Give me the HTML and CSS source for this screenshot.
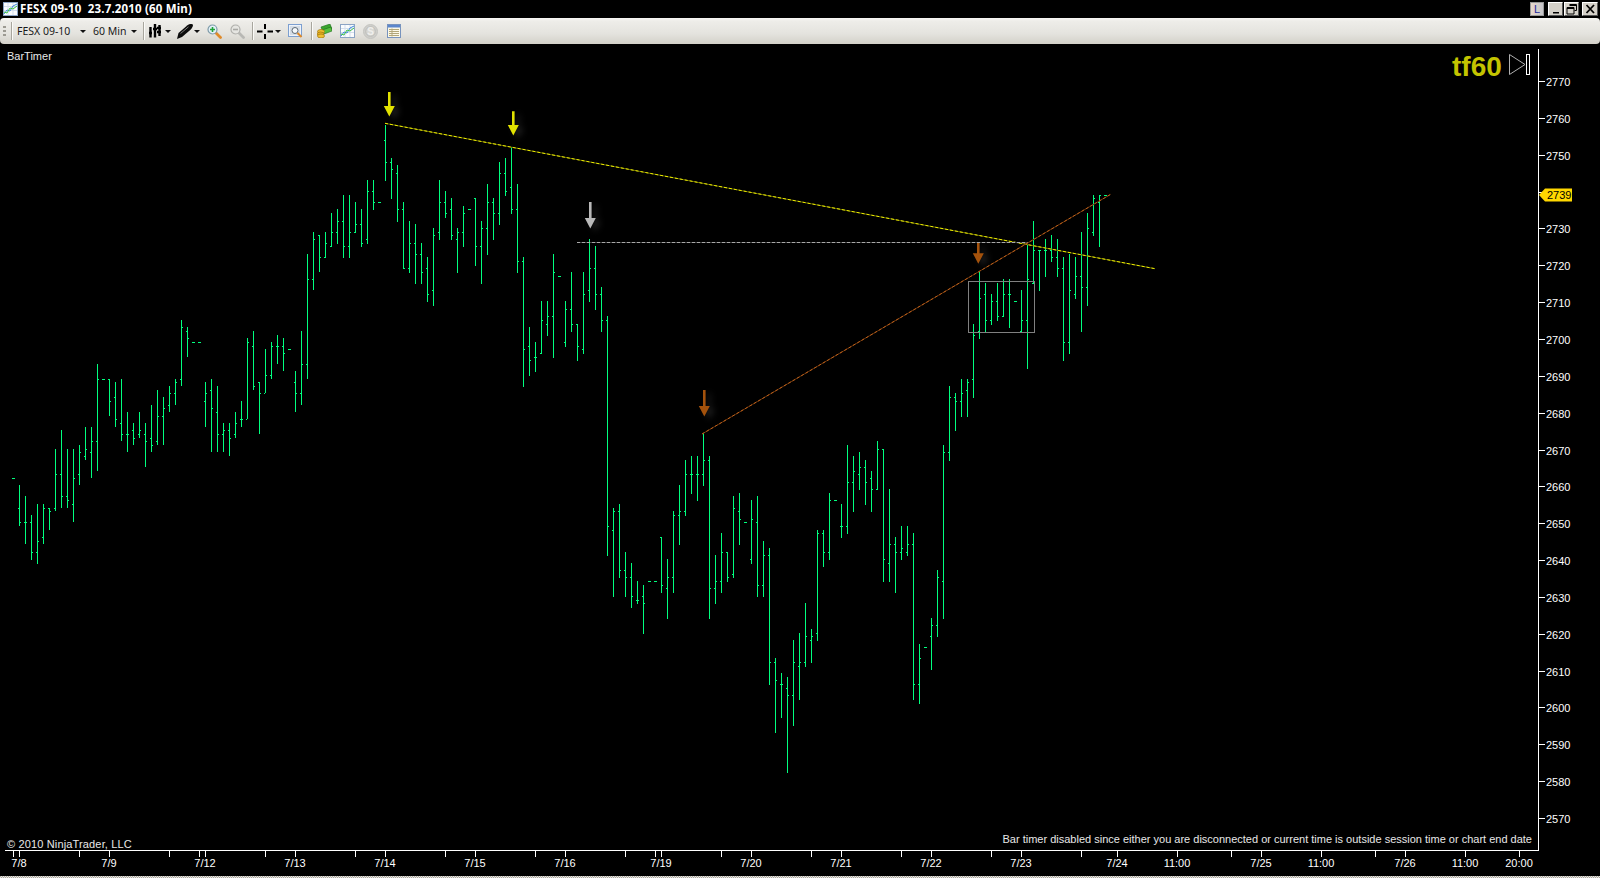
FILE: index.html
```html
<!DOCTYPE html>
<html lang="en">
<head>
<meta charset="utf-8">
<title>FESX 09-10 23.7.2010 (60 Min)</title>
<link rel="stylesheet" href="styles.css">
</head>
<body>
<svg class="defs" width="0" height="0" aria-hidden="true">
  <symbol id="chart-icon" viewBox="0 0 15 14">
    <rect x="0.5" y="0.5" width="14" height="13" fill="#fafcfe" stroke="#8ba4c4"/>
    <path d="M1 4.500H14M1 8.500H14M5 1V13M10 1V13" stroke="#d3deec" fill="none"/>
    <path d="M1 12L4 8L7 9L10 4L14 2" stroke="#3b86d8" stroke-width="1" fill="none"/>
    <path d="M1 10L4 11L7 6L10 7L14 4" stroke="#3cbf48" stroke-width="1" fill="none"/>
  </symbol>
</svg>

<header class="titlebar">
  <svg class="app-icon" width="15" height="14"><use href="#chart-icon"/></svg>
  <span class="title">FESX 09-10  23.7.2010 (60 Min)</span>
  <div class="winbtns">
    <span class="winbtn lock">L</span>
    <span class="winbtn min"><svg width="10" height="10"><path d="M2 8H8V9.500H2Z" fill="#000"/></svg></span>
    <span class="winbtn res"><svg width="12" height="11"><path d="M3.500 .5H10.500V6.500H8.500M1 3.500H8V10H1ZM1 4.500H8M3.500 1.500H10.500" fill="none" stroke="#000"/></svg></span>
    <span class="winbtn cls"><svg width="11" height="10"><path d="M1.500 1L9 9M9 1L1.500 9" stroke="#000" stroke-width="1.800"/></svg></span>
  </div>
</header>

<nav class="toolbar">
  <span class="grip"></span>
  <span class="sep ml5"></span>
  <span class="tb-text w55 ml5">FESX 09-10</span>
  <span class="caret ml8"></span>
  <span class="tb-text w30 ml8">60 Min</span>
  <span class="caret ml8"></span>
  <span class="sep ml7"></span>
  <svg class="ml5" width="12" height="14" viewBox="0 0 12 14"><path d="M1.500 3V13.500M0 9H3M6 0V13.500M4 5H8M10.500 1V12M8 4H12M8 8H12" stroke="#000" stroke-width="2.400" fill="none"/></svg>
  <span class="caret ml4"></span>
  <svg class="ml7" width="16" height="15" viewBox="0 0 16 15"><path d="M0 15L1.500 9L10.500 1.200C12.500 -.3 15.300 -.3 15.800 .6C16.300 2 15 4.300 13.500 5.800L5 13Z" fill="#0c0c0c"/><path d="M3.500 9.500L11.500 2.800" stroke="#9a9a9a" stroke-width=".8"/></svg>
  <span class="caret ml1"></span>
  <svg class="ml8" width="15" height="15" viewBox="0 0 15 15"><path d="M8.500 8.500L13.500 13.500" stroke="#e08a28" stroke-width="2.800" stroke-linecap="round"/><circle cx="5.500" cy="5.500" r="4.500" fill="#e4f1f8" stroke="#7d9aa8" stroke-width="1.200"/><path d="M3 5.500H8M5.500 3V8" stroke="#1fa23a" stroke-width="1.600"/></svg>
  <svg class="ml8" width="15" height="15" viewBox="0 0 15 15"><path d="M8.500 8.500L13.500 13.500" stroke="#b8b8b4" stroke-width="2.800" stroke-linecap="round"/><circle cx="5.500" cy="5.500" r="4.500" fill="#e6e6e2" stroke="#b0b0ac" stroke-width="1.200"/><path d="M3 5.500H8" stroke="#a8a8a4" stroke-width="1.600"/></svg>
  <span class="sep ml7"></span>
  <svg class="ml4" width="16" height="15" viewBox="0 0 16 15"><path d="M0 7.500H5.500M10.500 7.500H16M8 0V5M8 10V15" stroke="#000" stroke-width="2" fill="none"/></svg>
  <span class="caret ml2"></span>
  <svg class="ml8" width="15" height="14" viewBox="0 0 15 14"><rect x=".5" y=".5" width="13" height="12" fill="#eef3fa" stroke="#7c9fd0"/><rect x="2" y="2" width="10" height="9" fill="#d5dde6"/><circle cx="7" cy="6.500" r="3" fill="#f6f9fc" stroke="#5c6974"/><path d="M9.500 9L13.500 13" stroke="#e08a28" stroke-width="2"/></svg>
  <span class="sep ml8"></span>
  <svg class="ml5" width="15" height="14" viewBox="0 0 15 14"><path d="M4 3L13 0L15 5L6 8Z" fill="#3aa52e" stroke="#1d6e1a" stroke-width=".6"/><path d="M5 6L14 3L15 7L7 10Z" fill="#57c040" stroke="#1d6e1a" stroke-width=".6"/><ellipse cx="4" cy="7.500" rx="3.500" ry="2" fill="#f0c030" stroke="#9c7210" stroke-width=".7"/><ellipse cx="3.500" cy="10" rx="3.500" ry="2" fill="#e8b020" stroke="#9c7210" stroke-width=".7"/><ellipse cx="4" cy="12" rx="3.500" ry="2" fill="#f0c030" stroke="#9c7210" stroke-width=".7"/></svg>
  <svg class="ml8" width="15" height="14"><use href="#chart-icon"/></svg>
  <svg class="ml8" width="15" height="15" viewBox="0 0 15 15"><circle cx="7.500" cy="7.500" r="7" fill="#cfcfcb" stroke="#c4c4c0"/><circle cx="7.500" cy="7.500" r="4.800" fill="#d8d8d4" stroke="#bdbdb9"/><text class="dollar" x="7.500" y="11">S</text></svg>
  <svg class="ml9" width="14" height="14" viewBox="0 0 14 14"><rect x=".5" y=".5" width="13" height="13" fill="#fbf8e8" stroke="#7793bd"/><rect x="1" y="1" width="12" height="2.500" fill="#5b86cc"/><path d="M2 5.500H12M2 7.500H12M2 9.500H12M2 11.500H12M5 4.500V12.500" stroke="#b2a678" fill="none"/></svg>
</nav>

<main class="chart">
  <svg class="plot" viewBox="0 44 1600 832" width="1600" height="832">
    <text class="lbl" x="7" y="60">BarTimer</text>

    <text class="tf" x="1452" y="76">tf60</text>
    <path class="play" d="M1509.500 54.500V74.500L1525 64.500Z"/>
    <rect class="playbar" x="1526.500" y="54.500" width="3" height="20"/>

    <path id="bars" class="bars"/>

    <path class="trend-bg yellow-bg" d="M385 123.300L1155 268.700"/>
    <path class="trend yellow" d="M385 123.300L1155 268.700"/>
    <path class="trend-bg white-bg" d="M577 242.500H1028"/>
    <path class="trend white" d="M577 242.500H1028"/>
    <path class="trend-bg orange-bg" d="M702 434L1110.700 194.300"/>
    <path class="trend orange" d="M702 434L1110.700 194.300"/>
    <rect class="box" x="968.500" y="281.500" width="66" height="51"/>

    <path class="arrow a-yellow" d="M388 92H390.600V106H394.800L389.300 116.500L383.800 106H388Z"/>
    <path class="arrow a-yellow" d="M512 111.300H514.600V125H518.800L513.300 135.500L507.800 125H512Z"/>
    <path class="arrow a-gray" d="M589 202H591.600V218H595.800L590.300 228.500L584.800 218H589Z"/>
    <path class="arrow a-brown" d="M703 390H705.600V406H709.800L704.300 416.500L698.800 406H703Z"/>
    <path class="arrow a-brown" d="M977 243H979.600V253.300H983.800L978.300 263.800L972.800 253.300H977Z"/>

    <path class="axis" d="M1538.500 49V851M5 850.500H1539"/>
    <path class="axis" d="M1539 81.500H1545M1539 118.500H1545M1539 155.500H1545M1539 192.500H1545M1539 228.500H1545M1539 265.500H1545M1539 302.500H1545M1539 339.500H1545M1539 376.500H1545M1539 413.500H1545M1539 450.500H1545M1539 486.500H1545M1539 523.500H1545M1539 560.500H1545M1539 597.500H1545M1539 634.500H1545M1539 671.500H1545M1539 707.500H1545M1539 744.500H1545M1539 781.500H1545M1539 818.500H1545"/>
    <path class="axis" d="M13.500 851V857M19.500 851V857M79.500 851V857M109.500 851V857M169.500 851V857M199.500 851V857M205.500 851V857M265.500 851V857M295.500 851V857M355.500 851V857M385.500 851V857M445.500 851V857M475.500 851V857M535.500 851V857M565.500 851V857M625.500 851V857M655.500 851V857M661.500 851V857M721.500 851V857M751.500 851V857M811.500 851V857M841.500 851V857M901.500 851V857M931.500 851V857M991.500 851V857M1021.500 851V857M1081.500 851V857M1117.500 851V857M1177.500 851V857M1231.500 851V857M1261.500 851V857M1321.500 851V857M1375.500 851V857M1405.500 851V857M1465.500 851V857M1519.500 851V857"/>

    <g class="prices">
      <text x="1546" y="86">2770</text><text x="1546" y="123">2760</text><text x="1546" y="160">2750</text><text x="1546" y="197">2740</text>
      <text x="1546" y="233">2730</text><text x="1546" y="270">2720</text><text x="1546" y="307">2710</text><text x="1546" y="344">2700</text>
      <text x="1546" y="381">2690</text><text x="1546" y="418">2680</text><text x="1546" y="455">2670</text><text x="1546" y="491">2660</text>
      <text x="1546" y="528">2650</text><text x="1546" y="565">2640</text><text x="1546" y="602">2630</text><text x="1546" y="639">2620</text>
      <text x="1546" y="676">2610</text><text x="1546" y="712">2600</text><text x="1546" y="749">2590</text><text x="1546" y="786">2580</text>
      <text x="1546" y="823">2570</text>
    </g>
    <path class="flag" d="M1539 195L1545 188.500H1572V201.500H1545Z"/>
    <text class="flag-text" x="1547" y="199">2739</text>

    <g class="dates">
      <text x="19" y="867">7/8</text><text x="109" y="867">7/9</text><text x="205" y="867">7/12</text><text x="295" y="867">7/13</text>
      <text x="385" y="867">7/14</text><text x="475" y="867">7/15</text><text x="565" y="867">7/16</text><text x="661" y="867">7/19</text>
      <text x="751" y="867">7/20</text><text x="841" y="867">7/21</text><text x="931" y="867">7/22</text><text x="1021" y="867">7/23</text>
      <text x="1117" y="867">7/24</text><text x="1177" y="867">11:00</text><text x="1261" y="867">7/25</text><text x="1321" y="867">11:00</text>
      <text x="1405" y="867">7/26</text><text x="1465" y="867">11:00</text><text x="1519" y="867">20:00</text>
    </g>

    <text class="lbl copy" x="7" y="848">© 2010 NinjaTrader, LLC</text>
    <text class="lbl end" x="1532" y="843">Bar timer disabled since either you are disconnected or current time is outside session time or chart end date</text>
  </svg>
</main>
<footer class="strip"></footer>
<script src="chart.js"></script>
</body>
</html>
```
FILE: styles.css
```css
* { box-sizing: border-box; }
html, body { margin: 0; height: 100%; }
body {
  width: 1600px;
  height: 878px;
  overflow: hidden;
  background: #000;
  display: flex;
  flex-direction: column;
  font-family: "Liberation Sans", Arial, sans-serif;
}
.defs { position: absolute; }

.titlebar {
  height: 18px;
  display: flex;
  align-items: center;
  padding-left: 3px;
  color: #fff;
  background: #000;
}
.app-icon { margin-top: -1px; }
.title {
  margin-left: 2px;
  margin-top: -1px;
  white-space: pre;
  letter-spacing: .17px;
  font: bold 11.5px "Noto Sans", sans-serif;
}
.winbtns {
  margin-left: auto;
  display: flex;
  align-items: center;
  padding-right: 2px;
  gap: 1px;
}
.winbtn {
  width: 15px;
  height: 14px;
  display: flex;
  align-items: center;
  justify-content: center;
  background: #d4d0c8;
  border-style: solid;
  border-width: 1px;
  border-color: #fff #555 #555 #fff;
}
.lock {
  margin-right: 3px;
  width: 14px;
  background: linear-gradient(90deg, #e8d8cc, #c4c4c8);
  color: #1c2a9c;
  font-size: 11px;
  border-color: #999;
}
.cls { width: 16px; margin-left: 2px; }

.toolbar {
  height: 26px;
  display: flex;
  align-items: center;
  padding-left: 3px;
  border-radius: 4px;
  background: linear-gradient(#f8f7f4 0, #eeede9 12%, #e4e3de 60%, #d3d1c9 100%);
  color: #1a1a1a;
}
.toolbar svg { flex: none; }
.grip {
  width: 3px;
  height: 11px;
  background: repeating-linear-gradient(#9c9a92 0 2px, transparent 2px 4px);
}
.sep {
  width: 1px;
  height: 18px;
  background: #a8a69e;
  box-shadow: 1px 0 0 #fbfbf8;
}
.tb-text {
  white-space: nowrap;
  font: 10.5px "Noto Sans", sans-serif;
}
.w55 { width: 55px; }
.w30 { width: 30px; }
.caret {
  width: 0;
  height: 0;
  flex: none;
  box-sizing: content-box;
  margin-right: -1px;
  border-left: 3px solid transparent;
  border-right: 3px solid transparent;
  border-top: 3px solid #111;
}
.ml1 { margin-left: 1px; }
.ml2 { margin-left: 2px; }
.ml4 { margin-left: 4px; }
.ml5 { margin-left: 5px; }
.ml7 { margin-left: 7px; }
.ml8 { margin-left: 8px; }
.ml9 { margin-left: 9px; }
.dollar {
  font: bold 10px "Liberation Sans", sans-serif;
  fill: #efefec;
  text-anchor: middle;
}

.chart { flex: 1; min-height: 0; }
.plot { display: block; }
.plot text { font-family: "Liberation Sans", Arial, sans-serif; font-size: 11px; fill: #fff; }
.plot .lbl { fill: #e8e8e8; }
.plot .copy { letter-spacing: .15px; }
.plot .end { text-anchor: end; }
.plot .tf { font-size: 28px; font-weight: bold; fill: #c4c400; }
.plot .flag-text { fill: #000; }
.dates text { text-anchor: middle; }

.bars { fill: none; stroke: #00ff7f; stroke-width: 1; shape-rendering: crispEdges; }
.axis { fill: none; stroke: #fff; stroke-width: 1; shape-rendering: crispEdges; }
.play { fill: none; stroke: #b0b0b0; stroke-width: 1; }
.playbar { fill: none; stroke: #fff; stroke-width: 1; shape-rendering: crispEdges; }
.flag { fill: #ffd700; }

.trend, .trend-bg { fill: none; stroke-width: 1; }
.trend { stroke-dasharray: 3 2; }
.yellow { stroke: #ecec00; }
.yellow-bg { stroke: #6a6a00; }
.white { stroke: #a8a8a8; }
.white-bg { stroke: #444; }
.orange { stroke: #c06018; }
.orange-bg { stroke: #60320f; }
.box { fill: none; stroke: #808080; stroke-width: 1; shape-rendering: crispEdges; }

.arrow { filter: drop-shadow(5px 3px 3px rgba(255, 255, 255, .12)); }
.a-yellow { fill: #e2e200; }
.a-gray { fill: #b9b9b9; }
.a-brown { fill: #a4520c; }

.strip {
  height: 2px;
  background: repeating-conic-gradient(#e8e6e0 0 25%, #a8a6a0 0 50%) 0 0 / 2px 2px;
}
```
FILE: chart.js
```js
// Hourly OHLC bars. Each group: y origin, then rows of
// [x, high, low, open, close] or [x, flat], y values in thirds of a pixel.
var groups = [
  [250, [[13,685],[19,705,830,775,817],[25,738,884,817,817],[31,795,930,817,907],[37,762,942,907,874],[43,762,884,862,775],
    [49,775,842,775,784],[55,597,785,775,673],[61,540,776,673,739],[67,597,776,739,751],[73,597,818,763,685],[79,585,707,673,607],
    [85,531,632,619,598],[91,531,686,607,574],[97,342,665,574,388],[103,388],[109,388,500,388,454],[115,396,533,442,508],
    [121,387,575,520,553],[127,486,608,553,553],[133,519,587,541,565],[139,486,566,553,541],[145,519,653,553,574],[151,465,608,565,586],
    [157,420,587,574,499],[163,441,587,499,475],[169,408,488,466,430],[175,387,467,430,397],[181,210,410,388,232],[187,231,323,244,265],
    [193,277],[199,277],[205,396,533,454,430],[211,387,608,421,475],[217,408,608,487,553],[223,519,608,553,541],[229,519,620,541,565],
    [235,486,566,553,520],[241,453,533,508,508],[247,264,509,508,277],[253,243,422,289,409],[259,397,554,397,430],[265,297,430,430,376],
    [271,276,389,376,289],[277,255,344,289,289],[283,264,365,289,310],[289,298],[295,363,488,397,430],[301,243,467,430,343],
    [307,12,389,343,88],[313,-54,122,88,-33],[319,-45,68,-45,22]]],
  [90, [[325,426,504,502,460],[331,369,471,468,427],[337,357,462,427,394],[343,315,504,394,469],[349,315,504,469,427],
    [355,336,429,427,403],[361,357,471,403,460],[367,270,462,448,304]]],
  [80, [[373,300,390,334,367],[379,367],[385,135,303,181,247],[391,234,357,247,268],[397,255,426,280,388],[403,366,567,388,565],
    [409,423,579,565,490],[415,432,612,490,523],[421,489,612,523,577],[427,531,666,565,643],[433,444,678,631,466],[439,300,480,457,367],
    [445,333,414,367,400],[451,354,480,388,466],[457,444,579,478,457],[463,378,501,457,400],[469,388],[475,354,558,354,499],
    [481,423,612,499,445],[487,312,525,445,367],[493,354,480,367,400],[499,246,435,400,280],[505,234,348,280,334],[511,201,402,322,388],
    [517,312,579,388,544],[523,531,921,544,808],[529,741,888,799,841],[535,786,876,832,832],[541,663,822,820,721],[547,663,768,733,709],
    [553,522,834,709,577],[559,589],[565,663,801,787,688],[571,576,756,688,733],[577,732,843,733,799],[583,576,822,808,643],
    [589,477,666,631,565],[595,498,690,565,643],[601,621,756,643,721],[607,708,1428,721,1338]]],
  [380, [[613,384,651,451,394],[619,372,594,394,571],[625,516,651,571,592],[631,549,684,592,649],[637,603,672,661,661],[643,615,762,649,670],
    [649,604],[655,604],[661,471,639,471,616],[667,537,717,625,592],[673,393,639,592,406],[679,315,495,406,394],[685,240,408,394,283],
    [691,228,342,283,283],[697,228,363,283,283],[703,160,318,283,241],[709,228,717,241,625],[715,525,672,625,604],[721,459,639,604,517],
    [727,516,606,517,592],[733,348,594,583,385],[739,339,495,394,418],[745,427],[751,360,552,538,418],[757,348,651,427,616],[763,483,651,616,526],
    [769,504,915,526,847],[775,834,1059,847,901],[781,879,1014,913,913],[787,891,1179,925,946],[793,780,1038,946,847],[799,759,960,859,847],
    [805,669,861,847,769],[811,747,849,781,769],[817,450,783,760,460],[823,450,561,460,517],[829,339,540,517,361],[835,361],[841,372,474,439,439],
    [847,195,462,439,307],[853,228,396,307,274],[859,216,330,283,262],[865,240,375,262,307],[871,273,396,295,328],[877,183,330,328,208],
    [883,208,606,208,538],[889,327,606,550,493],[895,471,639,493,517],[901,438,540,517,505],[907,438,528,517,493]]],
  [420, [[913,339,840,373,793],[919,672,852,793,715],[925,682],[931,594,750,649,616],[937,450,651,616,472],[943,75,597,484,97],
    [949,-102,123,97,-69],[955,-81,33,-69,-57]]],
  [170, [[961,627,741,694,670],[967,627,741,661,637],[973,462,684,628,496],[979,303,507,484,385],[985,339,486,373,451],[991,372,465,451,394],
    [997,339,453,394,439],[1003,327,441,439,373],[1009,327,474,373,373],[1015,394],[1021,360,486,484,451],[1027,225,597,451,328],
    [1033,153,342,340,241],[1039,241,363,241,241],[1045,207,321,241,241],[1051,195,276,241,262],[1057,207,321,262,295],[1063,261,573,295,517],
    [1069,252,552,517,361],[1075,261,387,373,319],[1081,186,486,319,352],[1087,129,408,352,175],[1093,75,198,187,85],[1099,75,231,97,76],
    [1105,76]]]
];

var d = [];
groups.forEach(function (group) {
  var origin = group[0];
  function py(z) { return origin + Math.floor(z / 3); }
  group[1].forEach(function (r) {
    var x = r[0];
    if (r.length === 2) {
      d.push("M" + (x - 1) + " " + (py(r[1]) + 0.5) + "H" + (x + 2));
      return;
    }
    d.push("M" + (x + 0.5) + " " + py(r[1]) + "V" + py(r[2]));
    d.push("M" + (x - 1) + " " + (py(r[3]) + 0.5) + "H" + x);
    d.push("M" + (x + 1) + " " + (py(r[4]) + 0.5) + "H" + (x + 2));
  });
});
document.getElementById("bars").setAttribute("d", d.join(""));
```
